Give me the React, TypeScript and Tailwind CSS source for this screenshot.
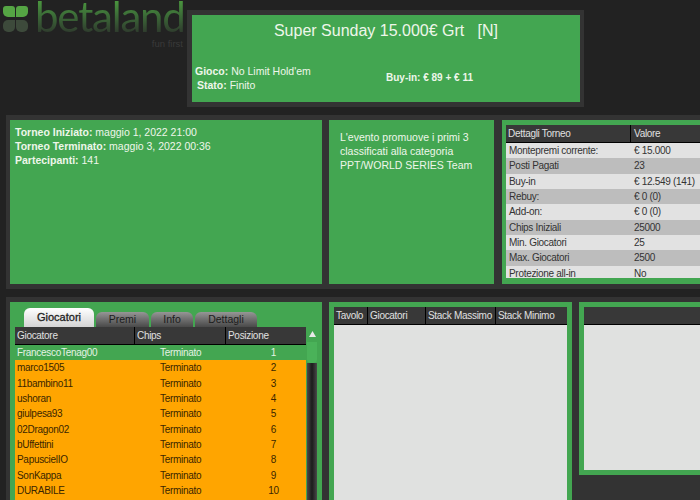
const font = "font-['Liberation_Sans',Arial,sans-serif]";

const details = [
  ['Montepremi corrente:', '€ 15.000'],
  ['Posti Pagati', '23'],
  ['Buy-in', '€ 12.549 (141)'],
  ['Rebuy:', '€ 0 (0)'],
  ['Add-on:', '€ 0 (0)'],
  ['Chips Iniziali', '25000'],
  ['Min. Giocatori', '25'],
  ['Max. Giocatori', '2500'],
  ['Protezione all-in', 'No'],
];

const players = [
  'FrancescoTenag00',
  'marco1505',
  '11bambino11',
  'ushoran',
  'giulpesa93',
  '02Dragon02',
  'bUffettini',
  'PapuscielIO',
  'SonKappa',
  'DURABILE',
];

const tabs = [
  { name: 'Premi', width: 'w-[53px]' },
  { name: 'Info', width: 'w-[42px]' },
  { name: 'Dettagli', width: 'w-[62px]' },
];

function Logo() {
  return (
    <div className="h-[50px] w-[187px] shrink-0 overflow-hidden">
      <div className="flex h-[38px] items-start pl-[3px]">
        <svg width="25" height="28" viewBox="0 0 25 28" className="mt-[5px] shrink-0">
          <g fill="#55a544">
            <path d="M3 1h6a3 3 0 0 1 3 3v8H5a5 5 0 0 1-5-5V4a3 3 0 0 1 3-3z" />
            <path d="M13 4a3 3 0 0 1 3-3h6a3 3 0 0 1 3 3v3a5 5 0 0 1-5 5h-7z" />
          </g>
          <g fill="#3d4a3b">
            <path d="M5 15h7v7a5 5 0 0 1-5 5H5a5 5 0 0 1-5-5v-2a5 5 0 0 1 5-5z" />
            <path d="M13 15h7a5 5 0 0 1 5 5v2a5 5 0 0 1-5 5h-2a5 5 0 0 1-5-5z" />
          </g>
        </svg>
        <div className="ml-[7px] mt-[-4px] bg-gradient-to-b from-[#4fa63f] via-[#3b6a37] to-[#2b322a] bg-clip-text font-['Lato',sans-serif] text-[42px] leading-[40px] tracking-[-1.2px] text-transparent">
          betaland
        </div>
      </div>
      <div className="pr-[4px] text-right text-[9.5px] leading-3 text-[#3a3a3a]">fun first</div>
    </div>
  );
}

function HeaderCell({ className, children }: { className: string; children?: React.ReactNode }) {
  return (
    <div className={`flex h-[18px] shrink-0 items-center whitespace-nowrap border-r border-b border-black bg-[#383838] pl-[2px] text-[10px] tracking-[-0.3px] text-[#e0e0e0] ${className}`}>
      {children}
    </div>
  );
}

export default function App() {
  return (
    <div className={`flex h-[500px] w-[700px] flex-col overflow-hidden bg-[#222] ${font}`}>
      <div className="flex h-[115px] shrink-0 items-start">
        <Logo />
        <div className="mt-[10px] border-y-[5px] border-l-[5px] border-r-[4px] border-[#333]">
          <div className="flex h-[87px] w-[388px] flex-col bg-[#43a651] text-[#eef6ea]">
            <div className="whitespace-pre pt-[6px] text-center text-[16px] leading-[20px]">
              {'Super Sunday 15.000€ Grt   [N]'}
            </div>
            <div className="mt-auto flex items-center pb-[10px] pl-[3px] text-[10.5px] leading-[14px]">
              <div className="w-[191px]">
                <div><b>Gioco:</b> No Limit Hold'em</div>
                <div className="pl-[2px]"><b>Stato:</b> Finito</div>
              </div>
              <b className="text-[10px]">Buy-in: € 89 + € 11</b>
            </div>
          </div>
        </div>
      </div>

      <div className="ml-[6px] flex h-[174px] shrink-0 gap-[7px] bg-[#333] py-[5px] pl-[4px]">
        <div className="w-[312px] shrink-0 bg-[#43a651] pl-[5px] pt-[5px] text-[10.5px] leading-[14px] text-[#eef6ea]">
          <div><b>Torneo Iniziato:</b> maggio 1, 2022 21:00</div>
          <div><b>Torneo Terminato:</b> maggio 3, 2022 00:36</div>
          <div><b>Partecipanti:</b> 141</div>
        </div>
        <div className="w-[165px] shrink-0 bg-[#43a651] pl-[11px] pr-[4px] pt-[10px] text-[10.5px] leading-[14px] text-[#eef6ea]">
          L'evento promuove i primi 3 classificati alla categoria PPT/WORLD SERIES Team
        </div>
        <div className="ml-[1px] grow bg-[#43a651] pl-[4px] pt-[5px]">
          <div className="h-[153px] overflow-hidden">
            <div className="flex">
              <HeaderCell className="w-[125px]">Dettagli Torneo</HeaderCell>
              <HeaderCell className="grow border-r-0 pl-[3px]">Valore</HeaderCell>
            </div>
            {details.map(([label, value], i) => (
              <div
                key={label}
                className={`flex h-[15.33px] items-center text-[10px] tracking-[-0.3px] text-[#333] ${i % 2 === 0 ? 'bg-[#e2e2e2]' : 'bg-[#bdbdbd]'}`}
              >
                <div className="w-[125px] pl-[3px]">{label}</div>
                <div className="pl-[3px]">{value}</div>
              </div>
            ))}
          </div>
        </div>
      </div>

      <div className="ml-[6px] mt-[8px] flex grow gap-[7px] bg-[#333] pl-[4px] pt-[5px]">
        <div className="h-[198px] w-[312px] shrink-0 bg-[#43a651] pl-[5px] pt-[6px]">
          <div className="flex h-[19px] items-end gap-[2px] pl-[9px]">
            <div className="flex h-[19px] w-[70px] items-center justify-center rounded-t-[6px] bg-gradient-to-b from-white to-[#d4d4d4] text-[11px] text-[#222] [-webkit-text-stroke:0.3px_#222]">
              Giocatori
            </div>
            {tabs.map(tab => (
              <div
                key={tab.name}
                className={`flex h-[15px] items-center justify-center rounded-t-[6px] bg-gradient-to-b from-[#969696] to-[#4a4a4a] text-[10.5px] text-[#1c1c1c] ${tab.width}`}
              >
                {tab.name}
              </div>
            ))}
          </div>
          <div className="flex">
            <div className="w-[291px] shrink-0">
              <div className="flex">
                <HeaderCell className="w-[120px]">Giocatore</HeaderCell>
                <HeaderCell className="w-[91px]">Chips</HeaderCell>
                <HeaderCell className="w-[80px] border-r-0">Posizione</HeaderCell>
              </div>
              {players.map((name, i) => (
                <div
                  key={name}
                  className={`flex h-[15.33px] items-center text-[10px] tracking-[-0.3px] ${i === 0 ? 'text-[#e4f2e4]' : 'bg-[#ffa500] text-[#3a2500]'}`}
                >
                  <div className="w-[145px] pl-[2px]">{name}</div>
                  <div className="w-[100px]">Terminato</div>
                  <div className="w-[27px] text-center">{i + 1}</div>
                </div>
              ))}
              <div className="h-[15px] bg-[#ffa500]" />
            </div>
            <div className="flex w-[10px] shrink-0 flex-col items-center">
              <svg width="9" height="8" viewBox="0 0 9 8" className="ml-[2px] mt-[3px] shrink-0">
                <path d="M4.5 1l3.5 6H1z" fill="#e8e8e8" />
              </svg>
              <div className="ml-[1px] mt-[4px] h-[21px] w-[10px] shrink-0 rounded-b-[4px] bg-[#4ab259]" />
              <div className="ml-[1px] h-[140px] w-[10px] shrink-0 bg-gradient-to-r from-[#4a4a4a] via-[#1c1c1c] to-[#4a4a4a]" />
            </div>
          </div>
        </div>

        <div className="flex h-[198px] w-[243px] shrink-0 flex-col bg-[#43a651] pl-[5px] pr-[5px] pt-[5px]">
          <div className="flex">
            <HeaderCell className="w-[34px]">Tavolo</HeaderCell>
            <HeaderCell className="w-[58px]">Giocatori</HeaderCell>
            <HeaderCell className="w-[70px]">Stack Massimo</HeaderCell>
            <HeaderCell className="grow border-r-0">Stack Minimo</HeaderCell>
          </div>
          <div className="grow bg-[#e0e1e0]" />
        </div>

        <div className="flex h-[173px] grow flex-col bg-[#43a651] pb-[5px] pl-[5px] pt-[5px]">
          <div className="h-[18px] border-b border-black bg-[#383838]" />
          <div className="grow bg-[#e0e1e0]" />
        </div>
      </div>
    </div>
  );
}
